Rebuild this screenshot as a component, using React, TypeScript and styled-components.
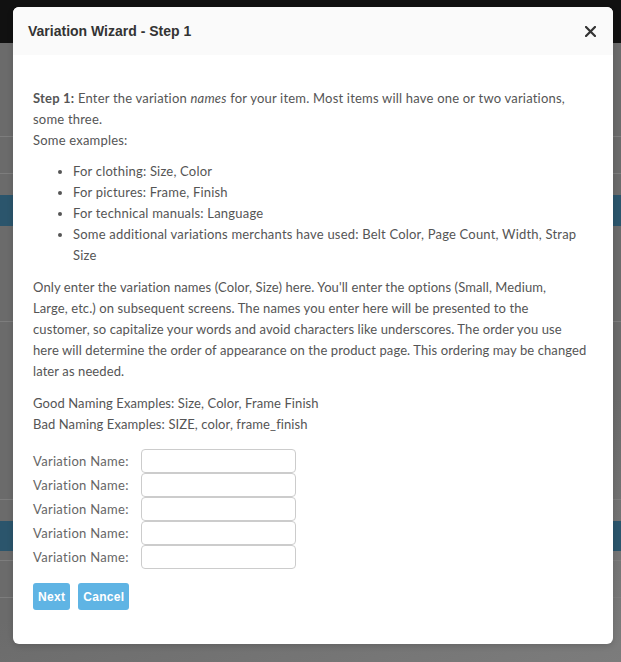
import React from "react";
import styled, {createGlobalStyle} from "styled-components";

const GlobalStyle = createGlobalStyle`
    html, body {
        margin: 0;
        padding: 0;
        background-color: #6b6b6b;
    }
    * {
        box-sizing: border-box;
    }
`

const Page = styled.div`
    position: relative;
    width: 621px;
    height: 662px;
    overflow: hidden;
    background: linear-gradient(160deg, #6b6b6b 70%, #7c7c7c 100%);
`

const TopBar = styled.div`
    height: 43px;
    background-color: #111111;
`

const BehindRow = styled.div`
    height: ${props => props.$h}px;
    background-color: ${props => props.$blue ? "#2b556c" : "transparent"};
    border-bottom: ${props => props.$line ? "1px solid #7d7d7d" : "none"};
`

const Overlay = styled.div`
    position: absolute;
    inset: 0;
    display: flex;
    align-items: flex-start;
    padding: 7px 0 0 13px;
`

const Modal = styled.div`
    width: 600px;
    background-color: #ffffff;
    border-radius: 6px;
    overflow: hidden;
    box-shadow: 0 2px 6px rgba(0, 0, 0, 0.15);
`

const Header = styled.div`
    height: 48px;
    display: flex;
    align-items: center;
    justify-content: space-between;
    padding: 0 17px 0 15px;
    background-color: #fafafa;
`

const Title = styled.h4`
    margin: 0;
    font-family: "Liberation Sans", Arial, sans-serif;
    font-size: 14px;
    font-weight: bold;
    color: #333333;
`

const CloseButton = styled.button`
    border: 0;
    padding: 0;
    background: none;
    width: 11px;
    height: 11px;
    display: flex;
    cursor: pointer;
`

const Body = styled.div`
    padding: 33px 20px 34px 20px;
    font-family: Lato, "Liberation Sans", sans-serif;
    font-size: 13px;
    line-height: 21px;
    letter-spacing: 0.2px;
    color: #555555;
`

const Para = styled.p`
    margin: 0 0 ${props => props.$gap ?? 10}px 0;
    letter-spacing: ${props => props.$tight ? "0.1px" : "inherit"};
`

const List = styled.ul`
    margin: 0 0 11px 0;
    padding-left: 40px;
`

const Form = styled.div`
    display: flex;
    flex-direction: column;
`

const FieldRow = styled.div`
    display: grid;
    grid-template-columns: 108px 155px;
    align-items: center;
    height: 24px;
`

const Label = styled.label`
    font-family: Lato, "Liberation Sans", sans-serif;
    font-size: 13px;
    letter-spacing: 0.3px;
    color: #666666;
`

const Input = styled.input`
    height: 24px;
    width: 155px;
    border: 1px solid #cccccc;
    border-radius: 4px;
    background-color: #ffffff;
    outline: none;
`

const Actions = styled.div`
    display: flex;
    gap: 8px;
    margin-top: 14px;
`

const Button = styled.button`
    height: 27px;
    padding: 0 5px;
    border: 0;
    border-radius: 3px;
    background-color: #5fb4e4;
    color: #ffffff;
    font-family: "Liberation Sans", Arial, sans-serif;
    font-size: 12px;
    font-weight: bold;
    letter-spacing: 0.3px;
    cursor: pointer;
`

const behindRows = [
    {h: 94, line: true},
    {h: 37, line: true},
    {h: 21},
    {h: 31, blue: true},
    {h: 96, line: true},
    {h: 178, line: true},
    {h: 21},
    {h: 30, blue: true},
    {h: 10, line: true},
    {h: 37, line: true},
]

function App() {
    return (
        <Page>
            <GlobalStyle/>
            <TopBar/>
            {behindRows.map((r, i) => (
                <BehindRow key={i} $h={r.h} $line={r.line} $blue={r.blue}/>
            ))}

            <Overlay>
                <Modal>
                    <Header>
                        <Title>Variation Wizard - Step 1</Title>
                        <CloseButton aria-label="Close">
                            <svg width="11" height="11" viewBox="0 0 11 11">
                                <path d="M1 1 L10 10 M10 1 L1 10" stroke="#333" strokeWidth="2.2" strokeLinecap="square"/>
                            </svg>
                        </CloseButton>
                    </Header>

                    <Body>
                        <Para>
                            <b>Step 1:</b> Enter the variation <i>names</i> for your item. Most items will have one or two variations, some three.
                            <br/>
                            Some examples:
                        </Para>
                        <List>
                            <li>For clothing: Size, Color</li>
                            <li>For pictures: Frame, Finish</li>
                            <li>For technical manuals: Language</li>
                            <li>Some additional variations merchants have used: Belt Color, Page Count, Width, Strap Size</li>
                        </List>
                        <Para $gap={11} $tight>
                            Only enter the variation names (Color, Size) here. You'll enter the options (Small, Medium,<br/>
                            Large, etc.) on subsequent screens. The names you enter here will be presented to the<br/>
                            customer, so capitalize your words and avoid characters like underscores. The order you use<br/>
                            here will determine the order of appearance on the product page. This ordering may be changed<br/>
                            later as needed.
                        </Para>
                        <Para $gap={14} $tight>
                            Good Naming Examples: Size, Color, Frame Finish
                            <br/>
                            Bad Naming Examples: SIZE, color, frame_finish
                        </Para>

                        <Form>
                            {[0, 1, 2, 3, 4].map(i => (
                                <FieldRow key={i}>
                                    <Label>Variation Name:</Label>
                                    <Input type="text"/>
                                </FieldRow>
                            ))}
                        </Form>

                        <Actions>
                            <Button>Next</Button>
                            <Button>Cancel</Button>
                        </Actions>
                    </Body>
                </Modal>
            </Overlay>
        </Page>
    )
}

export default App
